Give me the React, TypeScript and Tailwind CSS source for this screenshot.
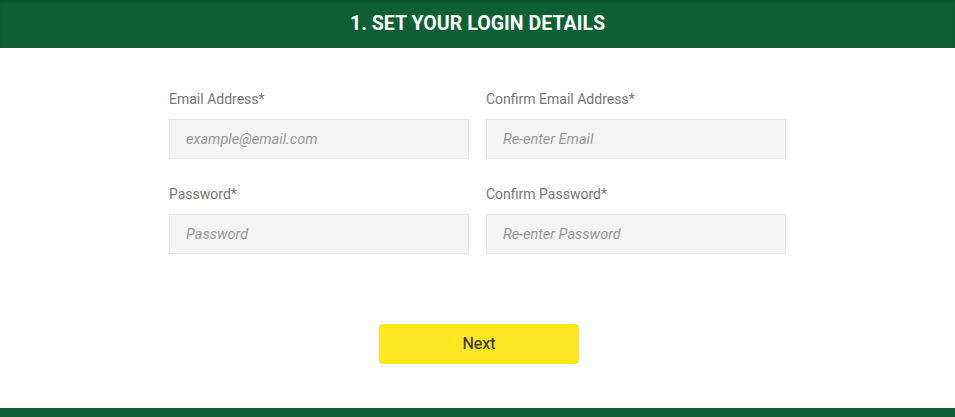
export default function App() {
  const font = { fontFamily: "Roboto, 'Liberation Sans', sans-serif" };
  return (
    <div className="w-[955px] h-[417px] bg-white flex flex-col" style={font}>
      <div className="h-[48px] bg-[#0e6034] flex items-center justify-center shadow-[inset_0_3px_3px_rgba(0,0,0,0.12)]">
        <h1 className="text-white text-[19.6px] font-bold leading-none">1. SET YOUR LOGIN DETAILS</h1>
      </div>
      <div className="flex-1 flex flex-col items-center">
        <div className="w-[617px] grid grid-cols-2 gap-x-[17px] mt-[43px]">
          <Field label="Email Address*" placeholder="example@email.com" />
          <Field label="Confirm Email Address*" placeholder="Re-enter Email" />
          <Field label="Password*" placeholder="Password" />
          <Field label="Confirm Password*" placeholder="Re-enter Password" />
        </div>
        <button className="mt-[43px] ml-[3px] w-[200px] h-[40px] rounded-[4px] bg-[#ffe620] text-[#333] text-[16px] font-normal [-webkit-text-stroke:0.2px_#333]">
          Next
        </button>
      </div>
      <div className="h-[9px] bg-[#0e6034]" />
    </div>
  );
}

function Field({ label, placeholder }: { label: string; placeholder: string }) {
  return (
    <div className="flex flex-col mb-[27px]">
      <label className="text-[14px] text-[#777] leading-[16px] h-[16px]">{label}</label>
      <input
        placeholder={placeholder}
        className="mt-[12px] h-[40px] bg-[#f4f4f4] border border-[#e6e6e6] px-[16px] text-[14.5px] italic outline-none placeholder:text-[#999]"
      />
    </div>
  );
}
